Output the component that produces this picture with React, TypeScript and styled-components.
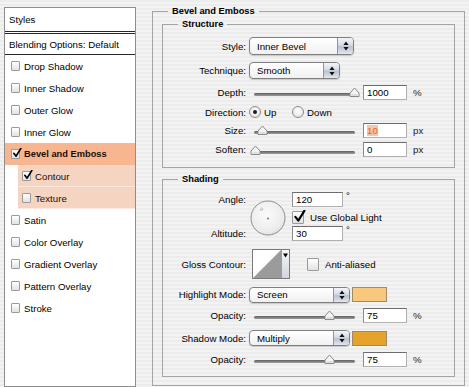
import React from 'react';
import styled, { createGlobalStyle } from 'styled-components';

const GlobalStyle = createGlobalStyle`
  html, body {
    margin: 0;
    padding: 0;
  }
  body {
    width: 469px;
    height: 387px;
    overflow: hidden;
    font-family: "Liberation Sans", Arial, sans-serif;
    font-size: 9.7px;
    color: #000;
    background: repeating-linear-gradient(180deg, #ececec 0 2px, #f3f3f3 2px 4px);
  }
`;

interface Effect {
  name: string;
  checked?: boolean;
  active?: boolean;
  sub?: boolean;
}

const effects: Effect[] = [
  { name: 'Drop Shadow' },
  { name: 'Inner Shadow' },
  { name: 'Outer Glow' },
  { name: 'Inner Glow' },
  { name: 'Bevel and Emboss', checked: true, active: true },
  { name: 'Contour', checked: true, sub: true },
  { name: 'Texture', sub: true },
  { name: 'Satin' },
  { name: 'Color Overlay' },
  { name: 'Gradient Overlay' },
  { name: 'Pattern Overlay' },
  { name: 'Stroke' }
];

const Check = ({ size, checked }: { size: number; checked?: boolean }) => (
  <S.CheckBox $size={size}>
    {checked && (
      <S.CheckMark width={size + 1} height={size + 1} viewBox="0 0 12 12">
        <path d="M2.2 6.4 L4.9 9.8 L10.6 0.6" fill="none" stroke="#000" strokeWidth="2" strokeLinecap="round" strokeLinejoin="round" />
      </S.CheckMark>
    )}
  </S.CheckBox>
);

const Popup = ({ value, w, h }: { value: string; w: number; h: number }) => (
  <S.Popup $w={w} $h={h}>
    <S.PopupText>{value}</S.PopupText>
    <S.PopupArrows>
      <svg width="6" height="10" viewBox="0 0 6 10">
        <path d="M3 0.5 L5.6 4 L0.4 4 Z M3 9.5 L5.6 6 L0.4 6 Z" fill="#111" />
      </svg>
    </S.PopupArrows>
  </S.Popup>
);

const Slider = ({ value }: { value: number }) => (
  <S.Slider>
    <S.Track />
    <S.Thumb viewBox="0 0 11 10" width="11" height="10" style={{ left: `${4 + value * 0.99}px` }}>
      <path d="M1 9.5 L1 6 L5.5 1 L10 6 L10 9.5 Z" fill="#f4f4f4" stroke="#8a8a8a" strokeWidth="1" />
      <path d="M2.5 8 L8.5 8" stroke="#c8c8c8" strokeWidth="1" />
    </S.Thumb>
  </S.Slider>
);

const SliderRow = ({ label, value, field, unit, h, hot }: { label: string; value: number; field: string; unit: string; h: number; hot?: boolean }) => (
  <S.Row $h={h}>
    <S.Label>{label}</S.Label>
    <S.Controls $gap={6}>
      <Slider value={value} />
      <S.Field $w={44}>{hot ? <S.Selected>{field}</S.Selected> : field}</S.Field>
      <S.Unit>{unit}</S.Unit>
    </S.Controls>
  </S.Row>
);

const App = () => {
  return (
    <>
      <GlobalStyle />
      <S.Window>
        <S.Panel>
          <S.PanelHead>Styles</S.PanelHead>
          <S.DoubleRule />
          <S.BlendRow>Blending Options: Default</S.BlendRow>
          <S.Rule />
          {effects.map((effect) => (
            <S.EffectRow key={effect.name} $active={effect.active} $sub={effect.sub}>
              <Check size={9} checked={effect.checked} />
              <span>{effect.name}</span>
            </S.EffectRow>
          ))}
        </S.Panel>

        <S.Group>
          <S.GroupTitle>Bevel and Emboss</S.GroupTitle>

          <S.SubGroup>
            <S.SubTitle>Structure</S.SubTitle>
            <S.Row $h={32}>
              <S.Label>Style:</S.Label>
              <Popup value="Inner Bevel" w={105} h={18} />
            </S.Row>
            <S.Row $h={16}>
              <S.Label>Technique:</S.Label>
              <Popup value="Smooth" w={91} h={17} />
            </S.Row>
            <SliderRow label="Depth:" value={100} field="1000" unit="%" h={28} />
            <S.Row $h={12}>
              <S.Label>Direction:</S.Label>
              <S.Controls $gap={0}>
                <S.RadioItem>
                  <S.Radio $on />
                  Up
                </S.RadioItem>
                <S.RadioItem>
                  <S.Radio />
                  Down
                </S.RadioItem>
              </S.Controls>
            </S.Row>
            <SliderRow label="Size:" value={7} field="10" unit="px" h={24} hot />
            <SliderRow label="Soften:" value={0} field="0" unit="px" h={14} />
          </S.SubGroup>

          <S.SubGroup $top={5} $bottom={7}>
            <S.SubTitle>Shading</S.SubTitle>
            <S.AngleBlock>
              <S.AngleLabel $row={1}>Angle:</S.AngleLabel>
              <S.AngleLabel $row={3}>Altitude:</S.AngleLabel>
              <S.Dial width="36" height="36" viewBox="0 0 36 36">
                <defs>
                  <radialGradient id="dialFill" cx="45%" cy="40%" r="65%">
                    <stop offset="0" stopColor="#fbfbfb" />
                    <stop offset="0.8" stopColor="#ebebeb" />
                    <stop offset="1" stopColor="#d4d4d4" />
                  </radialGradient>
                </defs>
                <circle cx="18" cy="18" r="17" fill="url(#dialFill)" stroke="#8f8f8f" strokeWidth="1" />
                <path d="M11.5 7.5 L13 10 M10 9 L11.5 11" stroke="#9a9a9a" strokeWidth="0.8" />
                <circle cx="18" cy="18.5" r="0.9" fill="#666" />
              </S.Dial>
              <S.AngleControls $row={1} $gap={3}>
                <S.Field $w={51}>120</S.Field>
                <S.Degree>°</S.Degree>
              </S.AngleControls>
              <S.AngleControls $row={2} $gap={6}>
                <Check size={12} checked />
                <span>Use Global Light</span>
              </S.AngleControls>
              <S.AngleControls $row={3} $gap={3}>
                <S.Field $w={51}>30</S.Field>
                <S.Degree>°</S.Degree>
              </S.AngleControls>
            </S.AngleBlock>

            <S.Row $h={44}>
              <S.Label>Gloss Contour:</S.Label>
              <S.Controls $gap={17}>
                <S.ContourSwatch>
                  <svg width="28" height="28" viewBox="0 0 28 28">
                    <rect width="28" height="28" fill="#fff" />
                    <polygon points="0,28 28,0 28,28" fill="#9b9b9b" />
                  </svg>
                  <S.ContourArrow>
                    <svg width="5" height="5" viewBox="0 0 5 5">
                      <path d="M0 0.5 L5 0.5 L2.5 4.5 Z" fill="#000" />
                    </svg>
                  </S.ContourArrow>
                </S.ContourSwatch>
                <S.Controls $gap={6}>
                  <Check size={12} />
                  <span>Anti-aliased</span>
                </S.Controls>
              </S.Controls>
            </S.Row>

            <S.Row $h={17}>
              <S.Label>Highlight Mode:</S.Label>
              <S.Controls $gap={2}>
                <Popup value="Screen" w={101} h={16} />
                <S.Swatch $color="#f8c97c" />
              </S.Controls>
            </S.Row>
            <SliderRow label="Opacity:" value={75} field="75" unit="%" h={24} />
            <S.Row $h={22}>
              <S.Label>Shadow Mode:</S.Label>
              <S.Controls $gap={2}>
                <Popup value="Multiply" w={101} h={16} />
                <S.Swatch $color="#e5a32b" />
              </S.Controls>
            </S.Row>
            <SliderRow label="Opacity:" value={75} field="75" unit="%" h={20} />
          </S.SubGroup>
        </S.Group>
      </S.Window>
    </>
  );
};

export default App;

const S = {
  Window: styled.div`
    display: flex;
    align-items: flex-start;
    gap: 16px;
    height: 387px;
    box-sizing: border-box;
    padding: 4px 0 0 4px;
  `,
  Panel: styled.div`
    width: 132px;
    height: 380px;
    margin-top: 3px;
    box-sizing: border-box;
    border: 1px solid #8e8e8e;
    background: #fff;
  `,
  PanelHead: styled.div`
    display: flex;
    align-items: center;
    height: 23px;
    padding-left: 4px;
  `,
  DoubleRule: styled.div`
    height: 1px;
    border-top: 1px solid #2a2a2a;
    border-bottom: 1px solid #2a2a2a;
  `,
  BlendRow: styled.div`
    display: flex;
    align-items: center;
    height: 20px;
    padding-left: 4px;
  `,
  Rule: styled.div`
    height: 1px;
    background: #2a2a2a;
  `,
  EffectRow: styled.div<{ $active?: boolean; $sub?: boolean }>`
    display: flex;
    align-items: center;
    gap: 4px;
    height: 22px;
    box-sizing: border-box;
    margin-left: ${(p) => (p.$sub ? 13 : 0)}px;
    padding-left: ${(p) => (p.$sub ? 4 : 6)}px;
    background: ${(p) => (p.$active ? '#f8b690' : p.$sub ? '#f6d4c2' : 'transparent')};
    box-shadow: ${(p) => (p.$sub ? 'inset 0 -1px 0 #fbe8de' : 'none')};
    font-weight: ${(p) => (p.$active ? 'bold' : 'normal')};
    font-size: ${(p) => (p.$active ? '9.3px' : '9.7px')};
    color: ${(p) => (p.$active || p.$sub ? '#1a0e08' : '#000')};
  `,
  CheckBox: styled.span<{ $size: number }>`
    position: relative;
    flex-shrink: 0;
    width: ${(p) => p.$size}px;
    height: ${(p) => p.$size + 1}px;
    box-sizing: border-box;
    border: 1px solid #9a9a9a;
    border-radius: 1px;
    background: linear-gradient(#ffffff, #e2e2e2);
  `,
  CheckMark: styled.svg`
    position: absolute;
    left: 0;
    bottom: 0;
  `,
  Group: styled.fieldset`
    width: 313px;
    margin: 0;
    min-width: 0;
    box-sizing: border-box;
    padding: 0 9px 8px 9px;
    border: 1px solid #a4a4a4;
  `,
  GroupTitle: styled.legend`
    margin-left: 6px;
    padding: 0 4px;
    line-height: 14px;
    font-size: 9.3px;
    font-weight: bold;
  `,
  SubGroup: styled.fieldset<{ $top?: number; $bottom?: number }>`
    margin: ${(p) => p.$top ?? 0}px 0 0 0;
    min-width: 0;
    padding: 0 0 ${(p) => p.$bottom ?? 11}px 0;
    border: 1px solid #a4a4a4;
  `,
  SubTitle: styled.legend`
    margin-left: 15px;
    padding: 0 4px;
    line-height: 12px;
    font-size: 9.3px;
    font-weight: bold;
  `,
  Row: styled.div<{ $h: number }>`
    display: grid;
    grid-template-columns: 83px 1fr;
    column-gap: 3px;
    align-items: center;
    height: ${(p) => p.$h}px;
  `,
  Label: styled.div`
    text-align: right;
    white-space: nowrap;
  `,
  Controls: styled.div<{ $gap: number }>`
    display: flex;
    align-items: center;
    gap: ${(p) => p.$gap}px;
    white-space: nowrap;
  `,
  Popup: styled.div<{ $w: number; $h: number }>`
    display: flex;
    align-items: stretch;
    width: ${(p) => p.$w}px;
    height: ${(p) => p.$h}px;
    box-sizing: border-box;
    border: 1px solid #7f7f7f;
    border-radius: 4px;
    overflow: hidden;
    background: linear-gradient(#ffffff, #f1f1f1);
    box-shadow: 0 1px 1px rgba(0, 0, 0, 0.18);
  `,
  PopupText: styled.span`
    flex: 1;
    display: flex;
    align-items: center;
    padding-left: 7px;
  `,
  PopupArrows: styled.span`
    display: flex;
    align-items: center;
    justify-content: center;
    width: 15px;
    border-left: 1px solid #8d95a3;
    background: linear-gradient(#f3f5f9, #d5dbe5 45%, #b9c2d1 55%, #e2e7ef);
  `,
  Slider: styled.div`
    position: relative;
    width: 106px;
    height: 12px;
    margin-left: 2px;
  `,
  Track: styled.div`
    position: absolute;
    left: 3px;
    right: 2px;
    top: 7px;
    height: 3px;
    border-radius: 2px;
    background: linear-gradient(#5f5f5f, #9d9d9d);
  `,
  Thumb: styled.svg`
    position: absolute;
    top: 1px;
    margin-left: -5px;
  `,
  Field: styled.div<{ $w: number }>`
    width: ${(p) => p.$w}px;
    height: 15px;
    box-sizing: border-box;
    padding-left: 3px;
    line-height: 13px;
    background: #fff;
    border: 1px solid #b0b0b0;
    border-top-color: #6c6c6c;
    border-left-color: #8c8c8c;
  `,
  Selected: styled.span`
    background: #fbc3a3;
    color: #e4642c;
  `,
  Unit: styled.span`
    color: #222;
  `,
  Degree: styled.span`
    align-self: flex-start;
    margin-top: -2px;
  `,
  RadioItem: styled.label`
    display: flex;
    align-items: center;
    gap: 3px;
    width: 43px;
  `,
  Radio: styled.span<{ $on?: boolean }>`
    position: relative;
    width: 12px;
    height: 12px;
    box-sizing: border-box;
    border: 1px solid #8a8a8a;
    border-radius: 50%;
    background: radial-gradient(circle at 50% 35%, #ffffff, #dedede);
    &::after {
      content: '';
      display: ${(p) => (p.$on ? 'block' : 'none')};
      position: absolute;
      left: 3px;
      top: 3px;
      width: 4px;
      height: 4px;
      border-radius: 50%;
      background: #1e1e1e;
    }
  `,
  AngleBlock: styled.div`
    display: grid;
    grid-template-columns: 83px 40px 1fr;
    grid-template-rows: 22px 15px 17px;
    column-gap: 3px;
    align-items: center;
    margin-top: 3px;
  `,
  AngleLabel: styled.div<{ $row: number }>`
    grid-column: 1;
    grid-row: ${(p) => p.$row};
    text-align: right;
  `,
  AngleControls: styled.div<{ $row: number; $gap: number }>`
    grid-column: 3;
    grid-row: ${(p) => p.$row};
    display: flex;
    align-items: center;
    gap: ${(p) => p.$gap}px;
    white-space: nowrap;
  `,
  Dial: styled.svg`
    grid-column: 2;
    grid-row: 1 / 4;
    margin: 6px 0 0 1px;
  `,
  ContourSwatch: styled.div`
    display: flex;
    margin-left: 3px;
    border: 1px solid #7a7a7a;
  `,
  ContourArrow: styled.div`
    display: flex;
    justify-content: center;
    width: 7px;
    padding-top: 3px;
    border-left: 1px solid #9a9a9a;
    background: linear-gradient(#f6f7fa, #cfd5df);
  `,
  Swatch: styled.div<{ $color: string }>`
    width: 35px;
    height: 15px;
    box-sizing: border-box;
    border: 1px solid #a08a66;
    background: ${(p) => p.$color};
  `
};
